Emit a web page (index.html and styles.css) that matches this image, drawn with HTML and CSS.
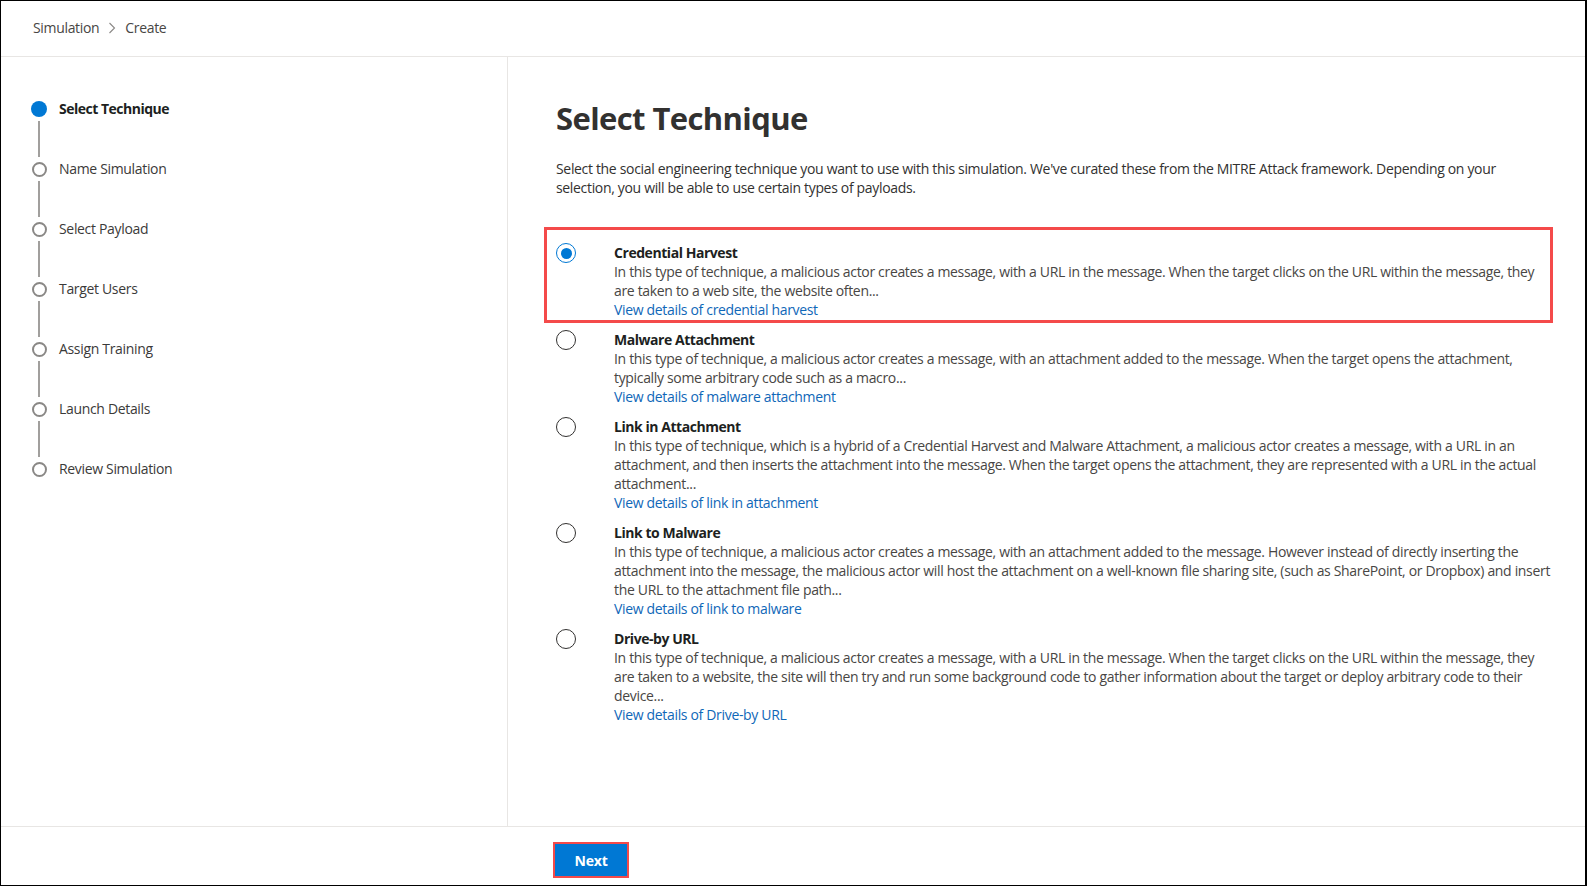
FILE: index.html
```html
<!DOCTYPE html>
<html lang="en">
<head>
<meta charset="utf-8">
<title>Simulation - Create</title>
<link rel="stylesheet" href="styles.css">
</head>
<body>
<div class="frame">
  <header class="topbar">
    <nav class="crumbs">
      <span class="crumb">Simulation</span>
      <svg class="chevron" width="8" height="12" viewBox="0 0 8 12" aria-hidden="true"><path d="M1.5 1 L6.5 6 L1.5 11" fill="none" stroke="#8a8886" stroke-width="1.1"/></svg>
      <span class="crumb current">Create</span>
    </nav>
  </header>
  <div class="workspace">
    <aside class="steps">
      <ol class="step-list">
        <li class="step active"><span class="marker"><span class="dot"></span><span class="line"></span></span><span class="label">Select Technique</span></li>
        <li class="step"><span class="marker"><span class="dot"></span><span class="line"></span></span><span class="label">Name Simulation</span></li>
        <li class="step"><span class="marker"><span class="dot"></span><span class="line"></span></span><span class="label">Select Payload</span></li>
        <li class="step"><span class="marker"><span class="dot"></span><span class="line"></span></span><span class="label">Target Users</span></li>
        <li class="step"><span class="marker"><span class="dot"></span><span class="line"></span></span><span class="label">Assign Training</span></li>
        <li class="step"><span class="marker"><span class="dot"></span><span class="line"></span></span><span class="label">Launch Details</span></li>
        <li class="step last"><span class="marker"><span class="dot"></span></span><span class="label">Review Simulation</span></li>
      </ol>
    </aside>
    <main class="content">
      <h1 class="title">Select Technique</h1>
      <p class="intro">Select the social engineering technique you want to use with this simulation. We've curated these from the MITRE Attack framework. Depending on your selection, you will be able to use certain types of payloads.</p>
      <div class="options">
        <div class="option highlighted">
          <span class="radio checked"></span>
          <div class="opt-text">
            <div class="opt-title">Credential Harvest</div>
            <div class="opt-desc">In this type of technique, a malicious actor creates a message, with a URL in the message. When the target clicks on the URL within the message, they are taken to a web site, the website often...</div>
            <a class="opt-link" href="#">View details of credential harvest</a>
          </div>
        </div>
        <div class="option">
          <span class="radio"></span>
          <div class="opt-text">
            <div class="opt-title">Malware Attachment</div>
            <div class="opt-desc">In this type of technique, a malicious actor creates a message, with an attachment added to the message. When the target opens the attachment, typically some arbitrary code such as a macro...</div>
            <a class="opt-link" href="#">View details of malware attachment</a>
          </div>
        </div>
        <div class="option">
          <span class="radio"></span>
          <div class="opt-text">
            <div class="opt-title">Link in Attachment</div>
            <div class="opt-desc">In this type of technique, which is a hybrid of a Credential Harvest and Malware Attachment, a malicious actor creates a message, with a URL in an attachment, and then inserts the attachment into the message. When the target opens the attachment, they are represented with a URL in the actual attachment...</div>
            <a class="opt-link" href="#">View details of link in attachment</a>
          </div>
        </div>
        <div class="option">
          <span class="radio"></span>
          <div class="opt-text">
            <div class="opt-title">Link to Malware</div>
            <div class="opt-desc">In this type of technique, a malicious actor creates a message, with an attachment added to the message. However instead of directly inserting the attachment into the message, the malicious actor will host the attachment on a well-known file sharing site, (such as SharePoint, or Dropbox) and insert the URL to the attachment file path...</div>
            <a class="opt-link" href="#">View details of link to malware</a>
          </div>
        </div>
        <div class="option">
          <span class="radio"></span>
          <div class="opt-text">
            <div class="opt-title">Drive-by URL</div>
            <div class="opt-desc">In this type of technique, a malicious actor creates a message, with a URL in the message. When the target clicks on the URL within the message, they are taken to a website, the site will then try and run some background code to gather information about the target or deploy arbitrary code to their device...</div>
            <a class="opt-link" href="#">View details of Drive-by URL</a>
          </div>
        </div>
      </div>
    </main>
  </div>
  <footer class="footer">
    <button class="btn-primary" type="button">Next</button>
  </footer>
</div>
</body>
</html>
```
FILE: styles.css
```css
* { box-sizing: border-box; }

html, body {
  margin: 0;
  padding: 0;
  background: #ffffff;
}

body {
  font-family: "Open Sans", "Noto Sans", sans-serif;
  font-size: 14px;
  color: #323130;
  letter-spacing: -0.33px;
}

.frame {
  width: 1587px;
  height: 886px;
  border: 1px solid #000;
  border-right-width: 2px;
  display: flex;
  flex-direction: column;
  background: #fff;
}

/* header */
.topbar {
  height: 56px;
  flex: none;
  border-bottom: 1px solid #e8e6e4;
  display: flex;
  align-items: center;
  padding-left: 32px;
}

.crumbs {
  display: flex;
  align-items: center;
  gap: 9px;
  font-size: 14px;
  line-height: 20px;
  color: #484644;
  margin-top: -1px;
}

.chevron { display: block; }

/* workspace */
.workspace {
  flex: 1;
  display: flex;
  min-height: 0;
}

.steps {
  width: 507px;
  flex: none;
  border-right: 1px solid #e8e6e4;
  padding: 44px 0 0 30px;
}

.step-list {
  list-style: none;
  margin: 0;
  padding: 0;
}

.step {
  display: flex;
  gap: 12px;
  height: 60px;
}

.step.last { height: 16px; }

.marker {
  width: 16px;
  display: flex;
  flex-direction: column;
  align-items: center;
}

.dot {
  width: 15px;
  height: 15px;
  border-radius: 50%;
  border: 2px solid #8a8886;
  background: #fff;
  margin-top: 0.5px;
  flex: none;
}

.step.active .dot {
  width: 16px;
  height: 16px;
  margin-top: 0;
  border: none;
  background: #0078d4;
}

.line {
  width: 2px;
  height: 36px;
  margin-top: 4px;
  background: #a19f9d;
}

.label {
  font-size: 14px;
  line-height: 16px;
  color: #3b3a39;
}

.step.active .label {
  font-weight: 700;
  letter-spacing: -0.5px;
  color: #201f1e;
}

/* content */
.content {
  flex: 1;
  padding: 41px 29px 0 48px;
  min-width: 0;
}

.title {
  margin: 0;
  font-size: 31px;
  line-height: 40px;
  font-weight: 700;
  color: #323130;
  letter-spacing: -0.6px;
}

.intro {
  margin: 21px 0 0 0;
  line-height: 19px;
  color: #323130;
}

.options {
  margin-top: 46px;
  display: flex;
  flex-direction: column;
  gap: 11px;
}

.option {
  position: relative;
  display: flex;
  gap: 38px;
}

.option.highlighted::after {
  content: "";
  position: absolute;
  top: -16px;
  left: -12px;
  right: 3px;
  bottom: -4px;
  border: 3px solid #f44a4a;
  pointer-events: none;
}

.radio {
  flex: none;
  width: 20px;
  height: 20px;
  border-radius: 50%;
  border: 1px solid #323130;
  display: flex;
  align-items: center;
  justify-content: center;
}

.radio.checked {
  border: 1.5px solid #0078d4;
}

.radio.checked::before {
  content: "";
  width: 11px;
  height: 11px;
  border-radius: 50%;
  background: #0078d4;
}

.opt-text {
  flex: 1;
  min-width: 0;
  line-height: 19px;
}

.opt-title {
  font-weight: 700;
  color: #201f1e;
  letter-spacing: -0.45px;
}

.opt-desc {
  color: #484644;
}

.opt-link {
  color: #0f67b8;
  text-decoration: none;
}

/* footer */
.footer {
  flex: none;
  height: 59px;
  border-top: 1px solid #e8e6e4;
  padding: 17px 0 0 554px;
}

.btn-primary {
  width: 72px;
  height: 32px;
  border: none;
  background: #0078d4;
  color: #fff;
  font-family: "Open Sans", "Noto Sans", sans-serif;
  font-size: 14px;
  font-weight: 700;
  letter-spacing: -0.2px;
  outline: 2px solid #f44a4a;
  outline-offset: 0;
  padding: 0;
  cursor: pointer;
}
```
